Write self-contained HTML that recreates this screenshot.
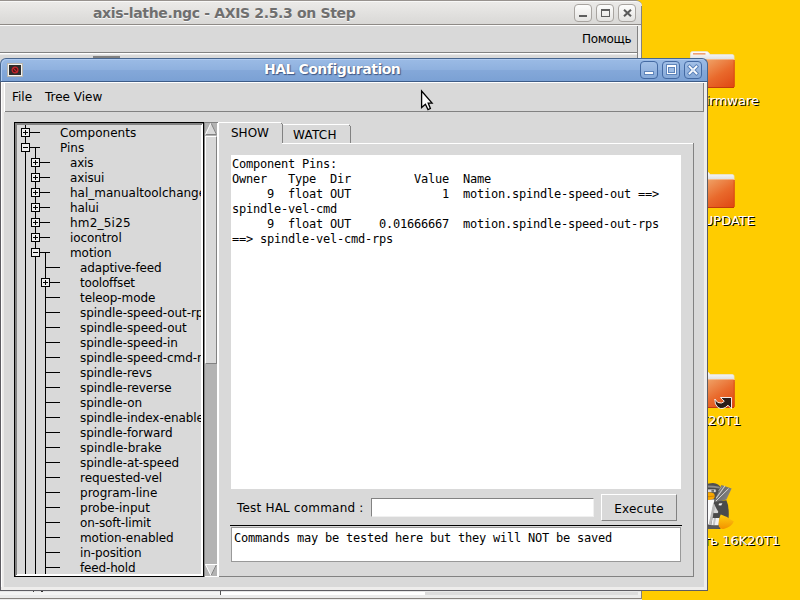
<!DOCTYPE html>
<html>
<head>
<meta charset="utf-8">
<title>HAL Configuration</title>
<style>
html,body{margin:0;padding:0;}
body{width:800px;height:600px;overflow:hidden;background:#ffcc00;position:relative;font-family:"DejaVu Sans","Liberation Sans",sans-serif;font-size:12px;color:#000;}
.a{position:absolute;}
i{position:absolute;display:block;}
/* desktop */
.dl{position:absolute;color:#fff;font-size:13px;white-space:nowrap;text-shadow:1px 1px 0 #000;}
/* AXIS window */
#axt{left:0;top:0;width:642px;height:25px;box-sizing:border-box;background:linear-gradient(#ecebe9,#d9d8d6);border-top:1px solid #97928e;border-bottom:1px solid #8e8a86;border-top-right-radius:6px;box-shadow:inset 0 1px 0 #f8f8f7;}
#axt .t{position:absolute;left:93px;top:4px;letter-spacing:-0.34px;font-weight:bold;font-size:14px;line-height:17px;color:#6f6f6f;white-space:nowrap;text-shadow:0 1px 0 #f6f6f6;}
.wb{position:absolute;top:3px;width:18px;height:18px;box-sizing:border-box;border:1px solid #a8a4a0;border-radius:4px;background:linear-gradient(#fdfdfc,#e4e3e1);}
/* HAL window */
#ht{left:0;top:58px;width:708px;height:24px;box-sizing:border-box;background:linear-gradient(#9bbbe5 0%,#8fb1df 48%,#84a8d9 52%,#7ba1d4 100%);border:1px solid #47668f;border-bottom:1px solid #3d5c87;border-radius:6px 6px 0 0;box-shadow:inset 1px 1px 0 #aecaf0;}
#ht .t{position:absolute;left:263px;top:2px;letter-spacing:-0.48px;text-shadow:1px 1px 1px rgba(40,62,105,0.75),0 0 1px rgba(40,62,105,0.6);font-weight:bold;font-size:14px;line-height:17px;color:#fff;white-space:nowrap;}
.hb{position:absolute;top:2px;width:18px;height:18px;box-sizing:border-box;border:1px solid #446aa3;border-radius:4px;background:linear-gradient(#a3c0e7,#86a9d8);}
.treein{position:absolute;left:17px;top:125px;width:184px;height:449px;overflow:hidden;background:#d9d9d9;}
.trow{position:absolute;height:15px;line-height:15px;white-space:nowrap;font-size:12px;letter-spacing:-0.07px;}
.bx{position:absolute;display:block;width:9px;height:9px;box-sizing:border-box;border:1px solid #000;background:#eee;}
.mono{font-family:"DejaVu Sans Mono","Liberation Mono",monospace;font-size:12px;line-height:15px;white-space:pre;letter-spacing:-0.2246px;}
</style>
</head>
<body>

<!-- ===== desktop icons ===== -->
<svg class="a" style="left:680px;top:40px" width="120" height="520" viewBox="680 40 120 520">
<defs>
<linearGradient id="fg" x1="0" y1="0" x2="1" y2="1"><stop offset="0" stop-color="#f5c08a"/><stop offset="0.3" stop-color="#ee9458"/><stop offset="0.6" stop-color="#e96a2c"/><stop offset="1" stop-color="#df4511"/></linearGradient>
<linearGradient id="pg" x1="0" y1="0" x2="0" y2="1"><stop offset="0" stop-color="#ffffff"/><stop offset="1" stop-color="#d6d6d6"/></linearGradient>

</defs>
<g>
<path d="M690.5 53.5Q690.5 51.5 692.5 51.5H706.5Q708 51.5 709 53L710 54.5H732.5Q734 54.5 734 56.5V62H690.5Z" fill="url(#pg)" stroke="#e9e3d6" stroke-width="0.8"/>
<rect x="693" y="53" width="12.5" height="1.6" fill="#f0a070"/>
<path d="M690 60.5Q690 59 691.5 59H733Q734.5 59 734.5 60.5V86Q734.5 87.8 732.8 87.8H691.8Q690 87.8 690 86Z" fill="url(#fg)"/>
<path d="M690.5 87.5H734" stroke="#c23a0c" stroke-width="1"/>
<path d="M734.2 60V87" stroke="#d2410f" stroke-width="0.8"/>
<path d="M690.3 59.6H734.2" stroke="#f9d3ad" stroke-width="0.8" opacity="0.8"/>
</g>
<g transform="translate(0,120)">
<path d="M690.5 53.5Q690.5 51.5 692.5 51.5H706.5Q708 51.5 709 53L710 54.5H732.5Q734 54.5 734 56.5V62H690.5Z" fill="url(#pg)" stroke="#e9e3d6" stroke-width="0.8"/>
<rect x="693" y="53" width="12.5" height="1.6" fill="#f0a070"/>
<path d="M690 60.5Q690 59 691.5 59H733Q734.5 59 734.5 60.5V86Q734.5 87.8 732.8 87.8H691.8Q690 87.8 690 86Z" fill="url(#fg)"/>
<path d="M690.5 87.5H734" stroke="#c23a0c" stroke-width="1"/>
<path d="M734.2 60V87" stroke="#d2410f" stroke-width="0.8"/>
<path d="M690.3 59.6H734.2" stroke="#f9d3ad" stroke-width="0.8" opacity="0.8"/>
</g>
<g transform="translate(0,320)">
<path d="M690.5 53.5Q690.5 51.5 692.5 51.5H706.5Q708 51.5 709 53L710 54.5H732.5Q734 54.5 734 56.5V62H690.5Z" fill="url(#pg)" stroke="#e9e3d6" stroke-width="0.8"/>
<rect x="693" y="53" width="12.5" height="1.6" fill="#f0a070"/>
<path d="M690 60.5Q690 59 691.5 59H733Q734.5 59 734.5 60.5V86Q734.5 87.8 732.8 87.8H691.8Q690 87.8 690 86Z" fill="url(#fg)"/>
<path d="M690.5 87.5H734" stroke="#c23a0c" stroke-width="1"/>
<path d="M734.2 60V87" stroke="#d2410f" stroke-width="0.8"/>
<path d="M690.3 59.6H734.2" stroke="#f9d3ad" stroke-width="0.8" opacity="0.8"/>
</g>
<!-- link emblem -->
<g>
<path d="M720.5 397.5L731.5 397.5L731.5 408.8L728 405.2Q723 410.5 718 407.5Q714.5 404.5 714.8 399Q717.5 404 721.5 403Q723.5 402.3 724.3 401.2Z" fill="#2a1c18" stroke="#fff" stroke-width="0.9" stroke-linejoin="miter"/>
</g>
<!-- penguin -->
<g>
<linearGradient id="ft" x1="0" y1="0" x2="0" y2="1"><stop offset="0" stop-color="#ffcf10"/><stop offset="1" stop-color="#f39200"/></linearGradient>
<linearGradient id="ml" x1="0" y1="0" x2="1" y2="0.6"><stop offset="0" stop-color="#8c8c8c"/><stop offset="0.5" stop-color="#6c6c6c"/><stop offset="1" stop-color="#8a8a8a"/></linearGradient>
<path d="M700 489Q704 483 713 483Q719 483.5 721 488L721 500L727 506Q730 513 728 521L720 529H700Z" fill="#4f4f4f"/>
<path d="M700 486.5Q708 484.5 719.5 486.8L720 488.6Q708 486.5 700 488.6Z" fill="#8c8c8c"/>
<path d="M700 499.5H714.5L713.5 504L709.5 524.5H700Z" fill="#fbfbfb"/>
<path d="M713.2 503L715.6 505L711 525H708.6Z" fill="#b9b9b9"/>
<path d="M715 505.5L719.5 508.5L717.6 513.5H713.6Z" fill="#d6d6d6"/>
<rect x="713.4" y="513.2" width="6.6" height="4.6" fill="#4a4a4a"/>
<path d="M712.6 518H719.6L718.6 525.2H711.2Z" fill="#f1f1f1"/>
<path d="M714 518L716 518L714.8 525H712.8Z" fill="#c4c4c4"/>
<rect x="706" y="489" width="10.2" height="3.6" rx="1" fill="#d9d9d9" stroke="#444" stroke-width="0.7"/>
<rect x="711.4" y="489.8" width="2.6" height="2" fill="#6a6a6a"/>
<path d="M703 493.2Q709 491.2 714 493.4Q715.6 496.4 713.6 498.8Q708 501 703 499.4Z" fill="#f9a900"/>
<path d="M704 496.3Q709 497.2 714.6 496" stroke="#c27a00" stroke-width="0.7" fill="none"/>
<path d="M721.4 485L731.6 488.6L726.5 499.5L716 502.6L714.2 501.4Z" fill="url(#ml)"/>
<path d="M725 485.8L716.2 498.2" stroke="#cfcfcf" stroke-width="1.1"/>
<path d="M728.6 488.6L716 501" stroke="#e2e2e2" stroke-width="0.9"/>
<path d="M722 486.5L718.5 491" stroke="#a8a8a8" stroke-width="0.8"/>
<path d="M714 502.4Q720 500.4 726.4 500.2Q729.6 507 728 515.6Q722.6 516.6 720.6 514.2Q715.6 509.4 714 502.4Z" fill="#4b4b4b"/>
<path d="M719 503.6L722.4 503.2L721.2 505.4L718.6 505.2Z" fill="#f4f4f4"/>
<path d="M720.8 514.6Q727.6 516.6 733.8 521.4Q731.6 526.6 724.4 528.8Q720 529.6 718.8 526.6Q717.8 520.4 720.8 514.6Z" fill="url(#ft)"/>
<path d="M700 525.4H711L718.6 526.4L719.4 528.4Q710 529.4 700 528.6Z" fill="#5a5a5a"/>
</g>
</svg>
<div class="dl" style="right:41px;top:93px;">firmware</div>
<div class="dl" style="right:45px;top:213px;">UPDATE</div>
<div class="dl" style="right:59px;top:413px;">16K20T1</div>
<div class="dl" style="right:20px;top:533px;">Запустить 16K20T1</div>


<!-- ===== AXIS window ===== -->
<div class="a" style="left:0;top:25px;width:642px;height:574px;background:#d9d9d9"></div>
<div class="a" id="axt">
  <div class="t">axis-lathe.ngc - AXIS 2.5.3 on Step</div>
  <div class="wb" style="left:574px"><i style="left:4px;top:10px;width:8px;height:2px;background:#5e5e5e"></i></div>
  <div class="wb" style="left:596px"><i style="left:4px;top:4px;width:9px;height:8px;box-sizing:border-box;border:1px solid #5e5e5e;border-top-width:2px"></i></div>
  <div class="wb" style="left:618px"><svg class="a" style="left:4px;top:4px" width="9" height="8" viewBox="0 0 9 8"><path d="M1 0.8L8 7.2M8 0.8L1 7.2" stroke="#5a5a5a" stroke-width="2.1"/></svg></div>
</div>
<i style="left:0;top:25px;width:641px;height:1px;background:#fbfbfb"></i>
<div class="a" style="left:582px;top:31px;line-height:16px;white-space:nowrap;letter-spacing:-0.3px;">Помощь</div>
<i style="left:0;top:52px;width:638px;height:1px;background:#828282"></i>
<i style="left:0;top:53px;width:638px;height:1px;background:#fff"></i>
<i style="left:0;top:54px;width:637px;height:1px;background:#ebebeb"></i>
<i style="left:93px;top:56px;width:27px;height:2px;background:#808080"></i>
<i style="left:637px;top:26px;width:1px;height:572px;background:#828282"></i>
<i style="left:638px;top:25px;width:3px;height:573px;background:#efefee"></i>
<i style="left:641px;top:6px;width:1px;height:593px;background:#85817d"></i>
<!-- bottom strip of AXIS -->
<i style="left:0;top:591px;width:641px;height:1px;background:#e6e6e6"></i>
<i style="left:0;top:592px;width:220px;height:3px;background:#f4f4f4"></i>
<i style="left:220px;top:591px;width:1px;height:4px;background:#555"></i>
<i style="left:221px;top:592px;width:204px;height:3px;background:#fff"></i>
<i style="left:425px;top:592px;width:213px;height:3px;background:#dcdcdc"></i>
<i style="left:0;top:595px;width:641px;height:3px;background:#ebebeb"></i>
<i style="left:33px;top:591px;width:1px;height:1px;background:#444"></i><i style="left:41px;top:591px;width:2px;height:1px;background:#333"></i>
<i style="left:0;top:598px;width:642px;height:1px;background:#87837f"></i>
<i style="left:0;top:599px;width:642px;height:1px;background:#ececec"></i>

<!-- ===== HAL window ===== -->
<div class="a" style="left:0;top:82px;width:708px;height:509px;box-sizing:border-box;background:#d9d9d9;border:1px solid #5e5d63;border-top:0;"></div>
<i style="left:1px;top:82px;width:706px;height:1px;background:#fff"></i>
<i style="left:1px;top:82px;width:1px;height:508px;background:#fff"></i><i style="left:2px;top:83px;width:2px;height:507px;background:#ecebea"></i>
<i style="left:704px;top:83px;width:3px;height:507px;background:#eeedec"></i>
<i style="left:1px;top:587px;width:706px;height:3px;background:#eeedec"></i>
<div class="a" id="ht">
  <div class="t">HAL Configuration</div>
  <div class="hb" style="left:639px"><i style="left:4px;top:10px;width:8px;height:2px;background:#fff;box-shadow:0 0 0 1px #5f85bb"></i></div>
  <div class="hb" style="left:661px"><i style="left:4px;top:3px;width:9px;height:9px;box-sizing:border-box;border:1px solid #fff;border-top-width:2px;box-shadow:0 0 0 1px #5f85bb, inset 0 0 0 1px #5f85bb;background:#9dbbe3"></i></div>
  <div class="hb" style="left:683px"><svg class="a" style="left:2px;top:2px" width="12" height="12" viewBox="0 0 12 12"><path d="M2.6 2.6L9.4 9.4M9.4 2.6L2.6 9.4" stroke="#5f85bb" stroke-width="3.8" stroke-linecap="square"/><path d="M2.6 2.6L9.4 9.4M9.4 2.6L2.6 9.4" stroke="#fff" stroke-width="1.9" stroke-linecap="square"/><rect x="5" y="5" width="2" height="2" fill="#dfe9f6"/></svg></div>
  <!-- app icon -->
  <i style="left:6px;top:4px;width:16px;height:14px;box-sizing:border-box;border:2px solid #f2f2f0;background:#2c2c2c;outline:1px solid #b9b6ae;outline-offset:-1px"></i>
  <svg class="a" style="left:10px;top:7px" width="8" height="8" viewBox="0 0 8 8"><circle cx="4" cy="4" r="2.9" fill="#4a1719" stroke="#c4262c" stroke-width="1.2"/><path d="M2.2 2.2L5.8 5.8" stroke="#c4262c" stroke-width="1.2"/></svg>
</div>

<!-- menubar -->
<i style="left:4px;top:82px;width:1px;height:30px;background:#fff"></i>
<i style="left:5px;top:111px;width:699px;height:1px;background:#828282"></i>
<i style="left:703px;top:83px;width:1px;height:29px;background:#828282"></i>
<div class="a" style="left:12px;top:89px;line-height:16px;white-space:nowrap;">File</div>
<div class="a" style="left:45px;top:89px;line-height:16px;white-space:nowrap;">Tree View</div>

<!-- tree -->
<div class="a" style="left:14px;top:122px;width:190px;height:455px;box-sizing:border-box;border:1px solid #000;background:#d9d9d9"></div>
<i style="left:15px;top:123px;width:188px;height:2px;background:#828282"></i>
<i style="left:15px;top:123px;width:2px;height:453px;background:#828282"></i>
<i style="left:16px;top:575px;width:187px;height:1px;background:#fff"></i>
<i style="left:17px;top:574px;width:186px;height:1px;background:#fff"></i>
<i style="left:202px;top:124px;width:1px;height:452px;background:#fff"></i>
<i style="left:201px;top:125px;width:1px;height:451px;background:#fff"></i>
<div class="treein">
<i style="left:8px;top:0px;width:1px;height:460px;background:#000"></i>
<i style="left:18px;top:22px;width:1px;height:440px;background:#000"></i>
<i style="left:28px;top:127px;width:1px;height:340px;background:#000"></i>
<i style="left:13px;top:7px;width:10px;height:1px;background:#000"></i>
<b class="bx" style="left:4px;top:3px"><i style="left:1px;top:3px;width:5px;height:1px;background:#000"></i><i style="left:3px;top:1px;width:1px;height:5px;background:#000"></i></b>
<span class="trow" style="left:43px;top:1px;letter-spacing:0.03px">Components</span>
<i style="left:13px;top:22px;width:10px;height:1px;background:#000"></i>
<b class="bx" style="left:4px;top:18px"><i style="left:1px;top:3px;width:5px;height:1px;background:#000"></i></b>
<span class="trow" style="left:43px;top:16px;letter-spacing:0.03px">Pins</span>
<i style="left:23px;top:37px;width:10px;height:1px;background:#000"></i>
<b class="bx" style="left:14px;top:33px"><i style="left:1px;top:3px;width:5px;height:1px;background:#000"></i><i style="left:3px;top:1px;width:1px;height:5px;background:#000"></i></b>
<span class="trow" style="left:53px;top:31px;letter-spacing:-0.17px">axis</span>
<i style="left:23px;top:52px;width:10px;height:1px;background:#000"></i>
<b class="bx" style="left:14px;top:48px"><i style="left:1px;top:3px;width:5px;height:1px;background:#000"></i><i style="left:3px;top:1px;width:1px;height:5px;background:#000"></i></b>
<span class="trow" style="left:53px;top:46px;letter-spacing:-0.13px">axisui</span>
<i style="left:23px;top:67px;width:10px;height:1px;background:#000"></i>
<b class="bx" style="left:14px;top:63px"><i style="left:1px;top:3px;width:5px;height:1px;background:#000"></i><i style="left:3px;top:1px;width:1px;height:5px;background:#000"></i></b>
<span class="trow" style="left:53px;top:61px;letter-spacing:0px">hal_manualtoolchange</span>
<i style="left:23px;top:82px;width:10px;height:1px;background:#000"></i>
<b class="bx" style="left:14px;top:78px"><i style="left:1px;top:3px;width:5px;height:1px;background:#000"></i><i style="left:3px;top:1px;width:1px;height:5px;background:#000"></i></b>
<span class="trow" style="left:53px;top:76px">halui</span>
<i style="left:23px;top:97px;width:10px;height:1px;background:#000"></i>
<b class="bx" style="left:14px;top:93px"><i style="left:1px;top:3px;width:5px;height:1px;background:#000"></i><i style="left:3px;top:1px;width:1px;height:5px;background:#000"></i></b>
<span class="trow" style="left:53px;top:91px;letter-spacing:0.21px">hm2_5i25</span>
<i style="left:23px;top:112px;width:10px;height:1px;background:#000"></i>
<b class="bx" style="left:14px;top:108px"><i style="left:1px;top:3px;width:5px;height:1px;background:#000"></i><i style="left:3px;top:1px;width:1px;height:5px;background:#000"></i></b>
<span class="trow" style="left:53px;top:106px">iocontrol</span>
<i style="left:23px;top:127px;width:10px;height:1px;background:#000"></i>
<b class="bx" style="left:14px;top:123px"><i style="left:1px;top:3px;width:5px;height:1px;background:#000"></i></b>
<span class="trow" style="left:53px;top:121px">motion</span>
<i style="left:28px;top:142px;width:15px;height:1px;background:#000"></i>
<span class="trow" style="left:63px;top:136px;letter-spacing:-0.14px">adaptive-feed</span>
<i style="left:33px;top:157px;width:10px;height:1px;background:#000"></i>
<b class="bx" style="left:24px;top:153px"><i style="left:1px;top:3px;width:5px;height:1px;background:#000"></i><i style="left:3px;top:1px;width:1px;height:5px;background:#000"></i></b>
<span class="trow" style="left:63px;top:151px;letter-spacing:-0.2px">tooloffset</span>
<i style="left:28px;top:172px;width:15px;height:1px;background:#000"></i>
<span class="trow" style="left:63px;top:166px">teleop-mode</span>
<i style="left:28px;top:187px;width:15px;height:1px;background:#000"></i>
<span class="trow" style="left:63px;top:181px">spindle-speed-out-rps</span>
<i style="left:28px;top:202px;width:15px;height:1px;background:#000"></i>
<span class="trow" style="left:63px;top:196px">spindle-speed-out</span>
<i style="left:28px;top:217px;width:15px;height:1px;background:#000"></i>
<span class="trow" style="left:63px;top:211px">spindle-speed-in</span>
<i style="left:28px;top:232px;width:15px;height:1px;background:#000"></i>
<span class="trow" style="left:63px;top:226px">spindle-speed-cmd-rps</span>
<i style="left:28px;top:247px;width:15px;height:1px;background:#000"></i>
<span class="trow" style="left:63px;top:241px">spindle-revs</span>
<i style="left:28px;top:262px;width:15px;height:1px;background:#000"></i>
<span class="trow" style="left:63px;top:256px">spindle-reverse</span>
<i style="left:28px;top:277px;width:15px;height:1px;background:#000"></i>
<span class="trow" style="left:63px;top:271px">spindle-on</span>
<i style="left:28px;top:292px;width:15px;height:1px;background:#000"></i>
<span class="trow" style="left:63px;top:286px">spindle-index-enable</span>
<i style="left:28px;top:307px;width:15px;height:1px;background:#000"></i>
<span class="trow" style="left:63px;top:301px">spindle-forward</span>
<i style="left:28px;top:322px;width:15px;height:1px;background:#000"></i>
<span class="trow" style="left:63px;top:316px;letter-spacing:0.03px">spindle-brake</span>
<i style="left:28px;top:337px;width:15px;height:1px;background:#000"></i>
<span class="trow" style="left:63px;top:331px">spindle-at-speed</span>
<i style="left:28px;top:352px;width:15px;height:1px;background:#000"></i>
<span class="trow" style="left:63px;top:346px;letter-spacing:-0.02px">requested-vel</span>
<i style="left:28px;top:367px;width:15px;height:1px;background:#000"></i>
<span class="trow" style="left:63px;top:361px;letter-spacing:0.01px">program-line</span>
<i style="left:28px;top:382px;width:15px;height:1px;background:#000"></i>
<span class="trow" style="left:63px;top:376px;letter-spacing:0.01px">probe-input</span>
<i style="left:28px;top:397px;width:15px;height:1px;background:#000"></i>
<span class="trow" style="left:63px;top:391px;letter-spacing:-0.12px">on-soft-limit</span>
<i style="left:28px;top:412px;width:15px;height:1px;background:#000"></i>
<span class="trow" style="left:63px;top:406px">motion-enabled</span>
<i style="left:28px;top:427px;width:15px;height:1px;background:#000"></i>
<span class="trow" style="left:63px;top:421px;letter-spacing:-0.12px">in-position</span>
<i style="left:28px;top:442px;width:15px;height:1px;background:#000"></i>
<span class="trow" style="left:63px;top:436px;letter-spacing:-0.16px">feed-hold</span>
</div>

<!-- scrollbar -->
<i style="left:204px;top:122px;width:14px;height:455px;background:#b3b3b3"></i>
<i style="left:204px;top:122px;width:14px;height:1px;background:#828282"></i>
<i style="left:204px;top:122px;width:1px;height:455px;background:#828282"></i>
<i style="left:217px;top:123px;width:1px;height:454px;background:#fff"></i>
<i style="left:205px;top:576px;width:13px;height:1px;background:#fff"></i>
<svg class="a" style="left:205px;top:123px" width="12" height="12" viewBox="0 0 12 12"><path d="M6 0L12 12H0Z" fill="#d9d9d9"/><path d="M6 0L11.5 11.5H0.5" fill="none" stroke="#828282" stroke-width="1"/><path d="M0.5 11.5L5.8 0.3" fill="none" stroke="#fff" stroke-width="1"/></svg>
<svg class="a" style="left:205px;top:564px" width="12" height="12" viewBox="0 0 12 12"><path d="M0 0H12L6 12Z" fill="#d9d9d9"/><path d="M11.5 0.5L6 11.7" fill="none" stroke="#828282" stroke-width="1"/><path d="M12 0.5H0.5L6 11.7" fill="none" stroke="#fff" stroke-width="1"/></svg>
<div class="a" style="left:205px;top:136px;width:12px;height:228px;box-sizing:border-box;background:#d9d9d9;border:1px solid;border-color:#fff #828282 #828282 #fff"></div>

<!-- notebook -->
<i style="left:218px;top:122px;width:1px;height:455px;background:#fff"></i>
<i style="left:219px;top:122px;width:62px;height:1px;background:#fff"></i>
<i style="left:281px;top:123px;width:1px;height:1px;background:#828282"></i>
<i style="left:282px;top:124px;width:1px;height:19px;background:#828282"></i>
<i style="left:283px;top:124px;width:66px;height:1px;background:#fff"></i>
<i style="left:349px;top:125px;width:1px;height:1px;background:#828282"></i>
<i style="left:350px;top:126px;width:1px;height:17px;background:#828282"></i>
<i style="left:282px;top:143px;width:411px;height:1px;background:#fff"></i>
<i style="left:693px;top:143px;width:1px;height:434px;background:#828282"></i>
<i style="left:219px;top:576px;width:475px;height:1px;background:#828282"></i>
<div class="a" style="left:231px;top:125px;line-height:16px;white-space:nowrap;">SHOW</div>
<div class="a" style="left:293px;top:127px;line-height:16px;white-space:nowrap;letter-spacing:0.25px;">WATCH</div>

<!-- text area -->
<div class="a mono" style="left:231px;top:155px;width:450px;height:334px;background:#fff;box-sizing:border-box;padding:2px 0 0 1px;">Component Pins:
Owner   Type  Dir         Value  Name
     9  float OUT             1  motion.spindle-speed-out ==&gt;
spindle-vel-cmd
     9  float OUT    0.01666667  motion.spindle-speed-out-rps
==&gt; spindle-vel-cmd-rps</div>

<!-- command row -->
<div class="a" style="left:237px;top:500px;line-height:16px;white-space:nowrap;letter-spacing:0.2px;">Test HAL command :</div>
<div class="a" style="left:371px;top:498px;width:223px;height:19px;box-sizing:border-box;background:#fff;border:1px solid;border-color:#828282 #f0f0f0 #f0f0f0 #828282"></div>
<div class="a" style="left:601px;top:494px;width:76px;height:27px;box-sizing:border-box;background:#d9d9d9;border:1px solid;border-color:#fff #828282 #828282 #fff;text-align:center;line-height:26px;letter-spacing:0.25px;padding-top:1px;">Execute</div>
<i style="left:230px;top:525px;width:452px;height:1px;background:#000"></i>
<div class="a mono" style="left:231px;top:527px;width:450px;height:35px;box-sizing:border-box;background:#fff;border:1px solid #999;padding:3px 0 0 2px;">Commands may be tested here but they will NOT be saved</div>

<!-- mouse cursor -->
<svg class="a" style="left:415px;top:85px" width="25" height="30" viewBox="415 85 25 30"><path d="M421.6 91L421.6 107.6L425.4 104.3L428 109.6L430.4 108.5L428.2 103.1L432.1 103.1Z" fill="#fbfbfb" stroke="#000" stroke-width="1.3" stroke-linejoin="miter"/></svg>

</body>
</html>
